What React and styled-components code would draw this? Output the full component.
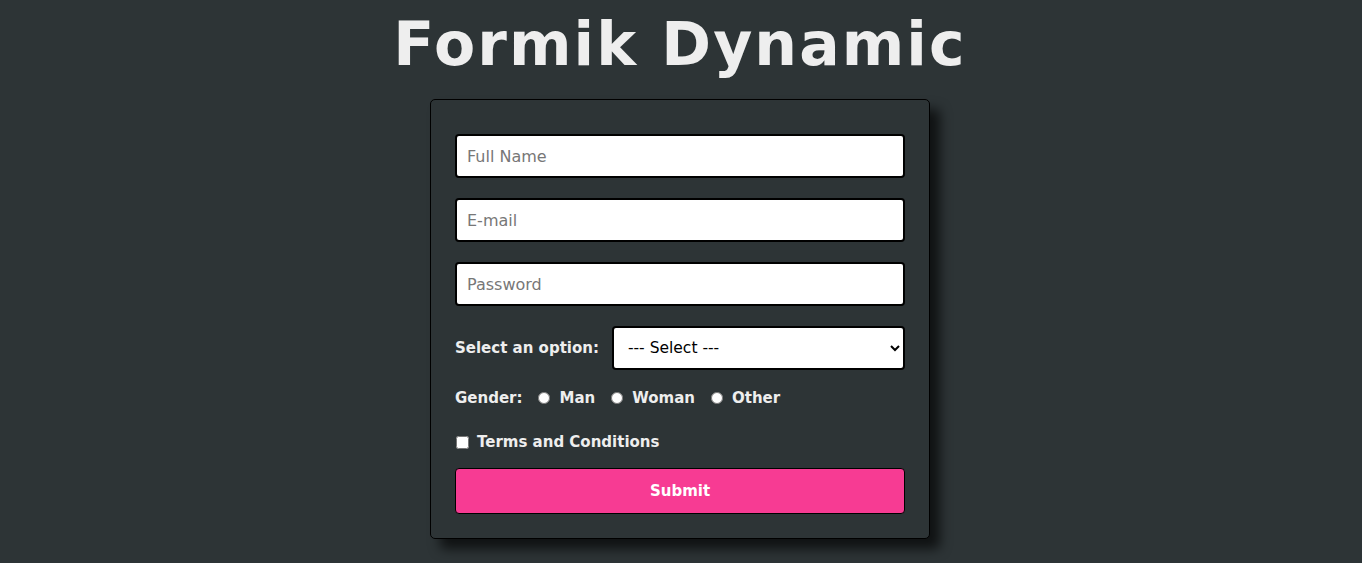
import React from "react";
import styled, { createGlobalStyle } from "styled-components";

const GlobalStyle = createGlobalStyle`
  body {
    margin: 0;
    background: #2d3436;
    font-family: "DejaVu Sans", "Noto Sans", sans-serif;
  }
`;

const Page = styled.div`
  display: flex;
  flex-direction: column;
  align-items: center;
  min-height: 563px;
  padding-right: 2px;
`;

const Title = styled.h1`
  margin: 6px 0 17px;
  font-size: 60px;
  line-height: 76px;
  font-weight: 700;
  color: #eeeeee;
  letter-spacing: 2.1px;
`;

const Card = styled.form`
  width: 500px;
  box-sizing: border-box;
  padding: 34px 24px 24px;
  border: 1px solid #000;
  border-radius: 5px;
  background: #2d3436;
  box-shadow: 10px 10px 12px rgba(0, 0, 0, 0.65);
  display: flex;
  flex-direction: column;
`;

const Input = styled.input`
  height: 44px;
  box-sizing: border-box;
  padding: 0 10px;
  margin-bottom: 20px;
  border: 2px solid #000;
  border-radius: 4px;
  background: #fff;
  font-family: inherit;
  font-size: 16px;
  color: #111;
  &::placeholder {
    color: #777;
  }
`;

const Row = styled.div`
  display: flex;
  align-items: center;
  height: ${(p) => p.h}px;
  gap: ${(p) => p.gap || 0}px;
  margin-bottom: ${(p) => p.mb || 0}px;
`;

const Label = styled.label`
  color: #eeeeee;
  font-size: 15px;
  line-height: 18px;
  font-weight: 700;
  display: flex;
  align-items: center;
  white-space: nowrap;
`;

const Select = styled.select`
  flex: 1;
  height: 44px;
  box-sizing: border-box;
  padding: 0 10px;
  border: 2px solid #000;
  border-radius: 4px;
  background: #fff;
  font-family: inherit;
  font-size: 15.5px;
  color: #000;
`;

const Radio = styled.input`
  width: 12px;
  height: 12px;
  margin: 0 9px 0 0;
`;

const Check = styled.input`
  width: 13px;
  height: 13px;
  margin: 0 8px 0 1px;
`;

const Button = styled.button`
  height: 46px;
  border: 1px solid #000;
  border-radius: 4px;
  background: #f73b93;
  color: #fff;
  font-family: inherit;
  font-size: 15px;
  font-weight: 700;
  cursor: pointer;
`;

const App = () => {
  return (
    <>
      <GlobalStyle />
      <Page>
        <Title>Formik Dynamic</Title>
        <Card onSubmit={(e) => e.preventDefault()}>
          <Input type="text" placeholder="Full Name" />
          <Input type="email" placeholder="E-mail" />
          <Input type="password" placeholder="Password" />
          <Row h={44} gap={13} mb={19}>
            <Label>Select an option:</Label>
            <Select defaultValue="">
              <option value="">--- Select ---</option>
              <option value="a">Option 1</option>
              <option value="b">Option 2</option>
            </Select>
          </Row>
          <Row h={18} gap={16} mb={26}>
            <Label>Gender:</Label>
            <Label>
              <Radio type="radio" name="gender" value="man" />
              Man
            </Label>
            <Label>
              <Radio type="radio" name="gender" value="woman" />
              Woman
            </Label>
            <Label>
              <Radio type="radio" name="gender" value="other" />
              Other
            </Label>
          </Row>
          <Row h={18} mb={17}>
            <Label>
              <Check type="checkbox" />
              Terms and Conditions
            </Label>
          </Row>
          <Button type="submit">Submit</Button>
        </Card>
      </Page>
    </>
  );
};

export default App;
